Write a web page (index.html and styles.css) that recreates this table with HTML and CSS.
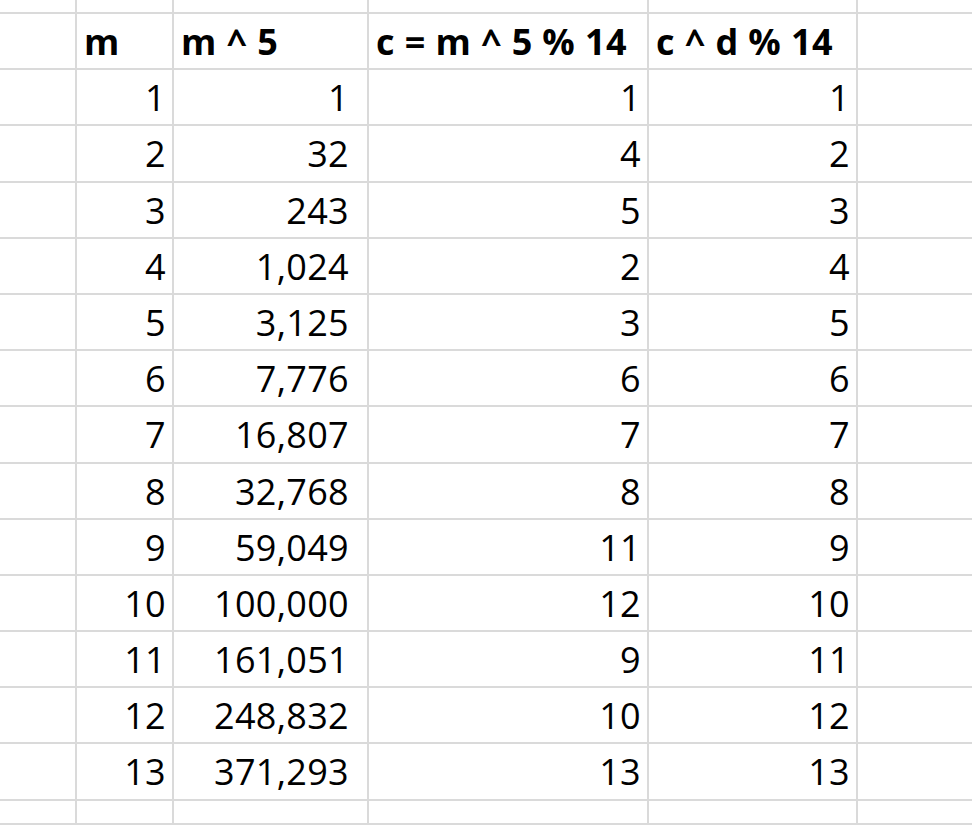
FILE: index.html
```html
<!DOCTYPE html>
<html lang="en">
<head>
<meta charset="utf-8">
<title>Sheet</title>
<link rel="stylesheet" href="styles.css">
</head>
<body>
<div class="sheet">
  <div class="c"></div><div class="c"></div><div class="c"></div><div class="c"></div><div class="c"></div><div class="c last"></div>

  <div class="c"></div><div class="c h">m</div><div class="c h">m ^ 5</div><div class="c h">c = m ^ 5 % 14</div><div class="c h">c ^ d % 14</div><div class="c last"></div>

  <div class="c"></div><div class="c n">1</div><div class="c n acc">1</div><div class="c n">1</div><div class="c n">1</div><div class="c last"></div>
  <div class="c"></div><div class="c n">2</div><div class="c n acc">32</div><div class="c n">4</div><div class="c n">2</div><div class="c last"></div>
  <div class="c"></div><div class="c n">3</div><div class="c n acc">243</div><div class="c n">5</div><div class="c n">3</div><div class="c last"></div>
  <div class="c"></div><div class="c n">4</div><div class="c n acc">1,024</div><div class="c n">2</div><div class="c n">4</div><div class="c last"></div>
  <div class="c"></div><div class="c n">5</div><div class="c n acc">3,125</div><div class="c n">3</div><div class="c n">5</div><div class="c last"></div>
  <div class="c"></div><div class="c n">6</div><div class="c n acc">7,776</div><div class="c n">6</div><div class="c n">6</div><div class="c last"></div>
  <div class="c"></div><div class="c n">7</div><div class="c n acc">16,807</div><div class="c n">7</div><div class="c n">7</div><div class="c last"></div>
  <div class="c"></div><div class="c n">8</div><div class="c n acc">32,768</div><div class="c n">8</div><div class="c n">8</div><div class="c last"></div>
  <div class="c"></div><div class="c n">9</div><div class="c n acc">59,049</div><div class="c n">11</div><div class="c n">9</div><div class="c last"></div>
  <div class="c"></div><div class="c n">10</div><div class="c n acc">100,000</div><div class="c n">12</div><div class="c n">10</div><div class="c last"></div>
  <div class="c"></div><div class="c n">11</div><div class="c n acc">161,051</div><div class="c n">9</div><div class="c n">11</div><div class="c last"></div>
  <div class="c"></div><div class="c n">12</div><div class="c n acc">248,832</div><div class="c n">10</div><div class="c n">12</div><div class="c last"></div>
  <div class="c"></div><div class="c n">13</div><div class="c n acc">371,293</div><div class="c n">13</div><div class="c n">13</div><div class="c last"></div>

  <div class="c"></div><div class="c"></div><div class="c"></div><div class="c"></div><div class="c"></div><div class="c last"></div>
</div>
</body>
</html>
```

FILE: styles.css
```css
html, body {
  margin: 0;
  padding: 0;
  background: #ffffff;
  overflow: hidden;
}

.sheet {
  width: 972px;
  height: 825px;
  display: grid;
  grid-template-columns: 77px 97px 195px 280px 209px 1fr;
  grid-template-rows: 14px repeat(14, 56.2px) 1fr;
  font-family: "Open Sans", Lato, sans-serif;
  font-size: 36px;
  color: #000000;
}

.c {
  box-sizing: border-box;
  border-right: 2px solid #dadada;
  border-bottom: 2px solid #dadada;
  line-height: 54px;
  padding-top: 1px;
  white-space: nowrap;
  overflow: hidden;
}

.c.last {
  border-right: none;
}

.h {
  font-weight: 700;
  padding-left: 7px;
  text-align: left;
  letter-spacing: 0.4px;
}

.n {
  font-weight: 500;
  text-align: right;
  padding-right: 6px;
  letter-spacing: 0.3px;
}

.n.acc {
  padding-right: 18px;
}
```
